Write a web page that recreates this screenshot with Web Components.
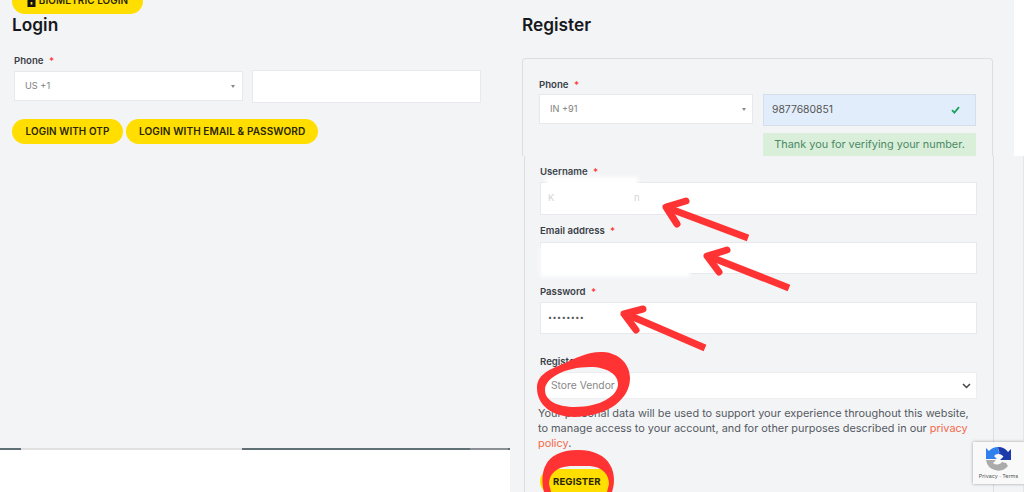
<!DOCTYPE html>
<html>
<head>
<meta charset="utf-8">
<style>
    html, body { margin: 0; height: 100%; }
    body {
        width: 1024px;
        height: 492px;
        overflow: hidden;
        background: #f3f4f6;
        font-family: "Inter", "Liberation Sans", sans-serif;
        color: #2b2f36;
    }
</style>
</head>
<body>
<account-page>
    <login-panel slot="left"></login-panel>
    <register-panel slot="right"></register-panel>
</account-page>

<script>
const FONT = `"Inter", "Liberation Sans", sans-serif`;

class PillButton extends HTMLElement {
    constructor() {
        super();
        this.attachShadow({mode: 'open'}).innerHTML = `
        <style>
            :host { display: inline-flex; align-items: center; justify-content: center; gap: 3px;
                height: 25px; padding: 0 14px; border-radius: 13px; background: #ffde00; color: #2a2600;
                font: 600 9.9px/1 ${FONT}; letter-spacing: .1px; white-space: nowrap; }
        </style>
        <slot></slot>`;
    }
}
customElements.define('pill-button', PillButton);

class FieldLabel extends HTMLElement {
    constructor() {
        super();
        this.attachShadow({mode: 'open'}).innerHTML = `
        <style>
            :host { display: block; font: 600 9.6px/12px ${FONT}; color: #3a3f47; }
            b { color: #f33; font-weight: 600; margin-left: 3px; }
        </style>
        <slot></slot> <b>*</b>`;
    }
}
customElements.define('field-label', FieldLabel);

class TextBox extends HTMLElement {
    constructor() {
        super();
        this.attachShadow({mode: 'open'}).innerHTML = `
        <style>
            :host { display: flex; align-items: center; justify-content: space-between; box-sizing: border-box;
                height: 32px; padding: 0 7px; background: #fff; border: 1px solid #e8e9ec;
                font: 400 9.2px/1 ${FONT}; color: #808080; }
            .arrow { display: none; width: 0; height: 0; border: 2.5px solid transparent; border-top: 3px solid #888; border-bottom: 0; }
            :host([arrow]) .arrow { display: block; }
        </style>
        <slot></slot><span class="arrow"></span>`;
    }
}
customElements.define('text-box', TextBox);

class LoginPanel extends HTMLElement {
    constructor() {
        super();
        this.attachShadow({mode: 'open'}).innerHTML = `
        <style>
            :host { display: block; }
            .bio { display: flex; align-items: flex-start; height: 14px; }
            .bio pill-button { width: 131px; height: 26px; padding: 0; margin-top: -12px; box-sizing: border-box; border-radius: 14px; }
            h2 { margin: 0; font: 600 17.3px/22px ${FONT}; color: #16181d; }
            .body { padding: 19px 0 0 2px; }
            .row { display: grid; grid-template-columns: 229px 229px; gap: 9px; align-items: start; margin-top: 3px; }
            .row text-box:first-child { height: 30px; margin-top: 1px; padding: 0 7px 0 10px; }
            .row text-box:last-child { height: 33px; }
            .buttons { display: flex; gap: 3px; margin-top: 16px; }
            .buttons pill-button:first-child { width: 111px; padding: 0; box-sizing: border-box; }
            .buttons pill-button + pill-button { padding: 0 13px; font-size: 10.05px; }
        </style>
        <div class="bio"><pill-button>
            <svg width="9" height="11" viewBox="0 0 9 11"><path fill="#111" d="M2 4V2.600a2.500 2.500 0 0 1 5 0V4h1.500v7H.5V4zm1 0h3V2.600a1.500 1.500 0 0 0-3 0z"/><rect x="3.600" y="6" width="1.800" height="2.600" fill="#ffde00"/></svg>
            <span>BIOMETRIC LOGIN</span></pill-button></div>
        <h2>Login</h2>
        <div class="body">
            <field-label>Phone</field-label>
            <div class="row">
                <text-box arrow>US +1</text-box>
                <text-box></text-box>
            </div>
        </div>
        <div class="buttons">
            <pill-button>LOGIN WITH OTP</pill-button>
            <pill-button>LOGIN WITH EMAIL &amp; PASSWORD</pill-button>
        </div>`;
    }
}
customElements.define('login-panel', LoginPanel);

class RegisterPanel extends HTMLElement {
    constructor() {
        super();
        this.attachShadow({mode: 'open'}).innerHTML = `
        <style>
            :host { display: block; height: 100%; }
            h2 { margin: 0; padding-top: 14px; font: 600 17.3px/22px ${FONT}; color: #16181d; }
            .top { margin-top: 22px; box-sizing: border-box; height: 98px; width: 471px; padding: 20px 16px 0;
                border: 1px solid #dcdee2; border-bottom: 0; border-radius: 4px 4px 0 0; }
            .phone { display: grid; grid-template-columns: 214px 213px; gap: 10px; margin-top: 3px; }
            .phone text-box:first-child { height: 30px; padding: 0 6px 0 10px; }
            .phone text-box:last-child { height: 32px; background: #e2edfb; border-color: #d5dfec; font-size: 10.4px; color: #555; padding: 0 15px 0 8px; }
            .ok { margin: 7px 0 0 224px; height: 23px; width: 213px; background: #d9efd9; color: #4c8a66;
                font: 400 10.9px/23px ${FONT}; text-align: center; white-space: nowrap; }
            .form { margin-left: 2px; width: 470px; height: 336px; box-sizing: border-box; padding: 10px 15px 0;
                border: solid #dcdee2; border-width: 0 1px; }
            .form text-box { width: 437px; }
            .user { margin-top: 4px; height: 33px; }
            .f-email { margin-top: 10px; }
            .email { margin-top: 5px; }
            .f-pass { margin-top: 12px; }
            .pass { margin-top: 4px; }
            .dots { font-size: 7.2px; color: #555; letter-spacing: .5px; }
            .f-sel { margin-top: 22px; }
            .box { display: flex; align-items: center; justify-content: space-between; margin-top: 4px; height: 27px; width: 437px;
                box-sizing: border-box; padding: 0 5px 0 10px; background: #fff; border: 1px solid #eceef0;
                font: 400 10.3px/1 ${FONT}; color: #888; }
            p { margin: 7px 0 0 -2px; width: 438px; font: 400 10.9px/15.2px ${FONT}; color: #555a62; }
            a { color: #f4694a; text-decoration: none; }
            .reg { margin-top: 17px; }
            .reg pill-button { padding: 0 13px; font-size: 9.6px; font-weight: 700; }
        </style>
        <h2>Register</h2>
        <div class="top">
            <field-label>Phone</field-label>
            <div class="phone">
                <text-box arrow>IN +91</text-box>
                <text-box>9877680851
                    <svg width="9" height="8" viewBox="0 0 9 8"><path d="M1 4.200 3.400 6.600 8 1.200" fill="none" stroke="#1aa260" stroke-width="1.800"/></svg>
                </text-box>
            </div>
            <div class="ok">Thank you for verifying your number.</div>
        </div>
        <div class="form">
            <field-label>Username</field-label>
            <text-box class="user"></text-box>
            <field-label class="f-email">Email address</field-label>
            <text-box class="email"></text-box>
            <field-label class="f-pass">Password</field-label>
            <text-box class="pass"><span class="dots">••••••••</span></text-box>
            <field-label class="f-sel">Register As</field-label>
            <div class="box">Store Vendor
                <svg width="9" height="6" viewBox="0 0 9 6"><path d="M1 1l3.500 3.500L8 1" fill="none" stroke="#444" stroke-width="1.500"/></svg>
            </div>
            <p>Your personal data will be used to support your experience throughout this website, to manage access to your account, and for other purposes described in our <a>privacy</a> <a>policy</a>.</p>
            <div class="reg"><pill-button>REGISTER</pill-button></div>
        </div>`;
    }
}
customElements.define('register-panel', RegisterPanel);

class RecaptchaBadge extends HTMLElement {
    constructor() {
        super();
        this.attachShadow({mode: 'open'}).innerHTML = `
        <style>
            :host { position: absolute; left: 973px; top: 442px; width: 51px; height: 42px; box-sizing: border-box;
                background: #f9f9f9; box-shadow: 0 0 3px rgba(0,0,0,.35); display: flex; flex-direction: column; align-items: center; }
            svg { margin-top: 4px; }
            span { font: 400 5.4px/7px ${FONT}; color: #555; white-space: nowrap; }
        </style>
        <svg width="27" height="27" viewBox="0 0 27 27">
            <path fill="#1c3aa9" d="M13 1a12 12 0 0 1 10 5l3-3v11H15l3.500-3.500A7 7 0 0 0 14 8z"/>
            <path fill="#2f80ed" d="M13 1A12.500 12.500 0 0 0 4 5L1 2v11h11L9 10a6 6 0 0 1 4-2l3-2-3-1z"/>
            <path fill="#ababab" d="M1 14h10l-3 3a6 6 0 0 0 9-1l4 1 2 3a12.500 12.500 0 0 1-22-6z"/>
        </svg>
        <span>Privacy · Terms</span>`;
    }
}
customElements.define('recaptcha-badge', RecaptchaBadge);

class AccountPage extends HTMLElement {
    constructor() {
        super();
        this.attachShadow({mode: 'open'}).innerHTML = `
        <style>
            :host { display: grid; grid-template-columns: 522px 502px; width: 1024px; height: 492px; position: relative; overflow: hidden; }
            .left { padding-left: 12px; }
            /* pasted screenshot edges */
            .blank { position: absolute; left: 0; top: 450px; width: 510px; height: 42px; background: #fff; }
            .rule { position: absolute; left: 0; top: 448px; width: 510px; height: 2px;
                background: linear-gradient(90deg, #5f6f76 0 21px, #e0e0e0 21px 242px, #5f6f76 242px 470px, #8a9094 470px 508px, #5f6f76 508px); }
            .strip { position: absolute; left: 1014px; top: 0; width: 10px; height: 156px; background: #fff; }
            .edge { position: absolute; left: 1023px; top: 156px; width: 1px; height: 336px; background: #e6e6e8; }
            /* blurred out personal data */
            .smudge { position: absolute; background: #fff; filter: blur(2px); }
            .faint { position: absolute; font: 400 9.5px/12px ${FONT}; color: #d4d4d4; }
            svg.marks { position: absolute; inset: 0; pointer-events: none; }
        </style>
        <div class="left"><slot name="left"></slot></div>
        <div><slot name="right"></slot></div>
        <div class="rule"></div>
        <div class="blank"></div>
        <div class="strip"></div>
        <div class="edge"></div>
        <div class="smudge" style="left:546px;top:177px;width:92px;height:34px"></div>
        <div class="smudge" style="left:540px;top:247px;width:150px;height:30px"></div>
        <span class="faint" style="left:548px;top:192px">K</span>
        <span class="faint" style="left:634px;top:192px">n</span>
        <svg class="marks" width="1024" height="492" viewBox="0 0 1024 492" fill="none" stroke="#ff3333" stroke-linejoin="round">
            <g stroke-width="7">
                <path d="M748 238 668 208"/><path d="M686 201 666 207 677 224" stroke-linecap="round"/>
                <path d="M789 288 708 256"/><path d="M727 250 707 256 719 272" stroke-linecap="round"/>
                <path d="M705 348 626 314"/><path d="M643 309 624 314 636 330" stroke-linecap="round"/>
            </g>
            <path stroke="none" fill="#ff3333" fill-rule="evenodd" d="M537 388C537 375 548 370 563 364C575 358 590 351 603 352C620 353 630 365 630 378C630 398 610 416 575 417C552 417 537 405 537 388z M545 390C545 378 565 367 590 367C608 367 618 375 618 384C618 396 600 407 575 407C558 407 545 401 545 390z"/>
            <path stroke="none" fill="#ff3333" fill-rule="evenodd" d="M544 492C540 475 542 450 578 450C612 450 618 475 612 492z M551 492L549 484C549 474 556 467 570 466L590 466C602 467 609 474 609 484L607 492z"/>
        </svg>
        <recaptcha-badge></recaptcha-badge>`;
    }
}
customElements.define('account-page', AccountPage);
</script>
</body>
</html>
